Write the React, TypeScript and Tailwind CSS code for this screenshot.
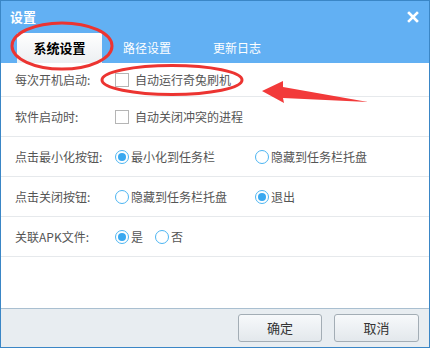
const font = { fontFamily: '"Noto Sans CJK SC", "Noto Sans", sans-serif' };

function Radio({ checked }: { checked?: boolean }) {
  return (
    <span className="flex h-[14px] w-[14px] shrink-0 items-center justify-center rounded-full border-[1.5px] border-[#4cb5f2] bg-white">
      {checked && <span className="h-[8px] w-[8px] rounded-full bg-[#38a8f0]" />}
    </span>
  );
}

function Check() {
  return <span className="h-[14px] w-[14px] shrink-0 border border-[#b5b5b5] bg-white" />;
}

function Option({ checked, label, width }: { checked?: boolean; label: string; width?: string }) {
  return (
    <label className={`flex items-center gap-[2px] ${width ?? ""}`}>
      <Radio checked={checked} />
      <span>{label}</span>
    </label>
  );
}

function Row({ label, children, first }: { label: string; children: React.ReactNode; first?: boolean }) {
  return (
    <div
      className={`flex items-center border-b border-[#e6e9ec] pl-[14px] ${first ? "h-[34px]" : "h-[40px]"}`}
    >
      <div className="w-[100px] shrink-0">{label}</div>
      <div className="flex items-center">{children}</div>
    </div>
  );
}

export default function App() {
  return (
    <div
      className="relative flex h-[348px] w-[430px] flex-col overflow-hidden border border-[#3a86c6] bg-white text-[12px] text-[#555]"
      style={font}
    >
      <div className="flex h-[62px] shrink-0 flex-col bg-[#62b0f3]">
        <div className="flex h-[32px] items-center justify-between pl-[9px] pr-[10px]">
          <span className="text-[13px] font-bold text-white">设置</span>
          <svg width="12" height="12" viewBox="0 0 12 12">
            <path d="M2 2 L10 10 M10 2 L2 10" stroke="#fff" strokeWidth="2.6" strokeLinecap="square" />
          </svg>
        </div>
        <div className="flex h-[30px] items-stretch pl-[16px] text-[12px] text-white">
          <div className="flex w-[85px] items-center justify-center bg-gradient-to-b from-white to-[#eceff2] text-[13px] font-bold text-black">
            系统设置
          </div>
          <div className="flex w-[90px] items-center justify-center">路径设置</div>
          <div className="flex w-[90px] items-center justify-center">更新日志</div>
        </div>
      </div>

      <Row label="每次开机启动:" first>
        <label className="flex items-center gap-[6px]">
          <Check />
          <span>自动运行奇兔刷机</span>
        </label>
      </Row>
      <Row label="软件启动时:">
        <label className="flex items-center gap-[6px]">
          <Check />
          <span>自动关闭冲突的进程</span>
        </label>
      </Row>
      <Row label="点击最小化按钮:">
        <Option checked label="最小化到任务栏" width="w-[140px]" />
        <Option label="隐藏到任务栏托盘" />
      </Row>
      <Row label="点击关闭按钮:">
        <Option label="隐藏到任务栏托盘" width="w-[140px]" />
        <Option checked label="退出" />
      </Row>
      <Row label="关联APK文件:">
        <Option checked label="是" width="w-[40px]" />
        <Option label="否" />
      </Row>

      <div className="flex-1" />

      <div className="flex h-[39px] shrink-0 items-start justify-end gap-[12px] border-t border-[#a9bfd0] bg-[#e8edf1] pr-[10px] pt-[5px]">
        <button className="h-[28px] w-[84px] rounded-[3px] border border-[#a3adb5] bg-gradient-to-b from-[#f7f9fb] to-[#e3e8ec] text-[13px] text-[#333]">
          确定
        </button>
        <button className="h-[28px] w-[85px] rounded-[3px] border border-[#a3adb5] bg-gradient-to-b from-[#f7f9fb] to-[#e3e8ec] text-[13px] text-[#333]">
          取消
        </button>
      </div>

      <svg className="pointer-events-none absolute left-[-1px] top-[-1px]" width="430" height="348">
        <ellipse cx="62" cy="46" rx="50" ry="23" fill="none" stroke="#ec3431" strokeWidth="3" />
        <ellipse cx="172" cy="80" rx="70" ry="14.5" fill="none" stroke="#ec3431" strokeWidth="3" />
        <polygon points="262,91 283,81 283,87 368,102 283,98 284,103" fill="#f23a3a" />
      </svg>
    </div>
  );
}
